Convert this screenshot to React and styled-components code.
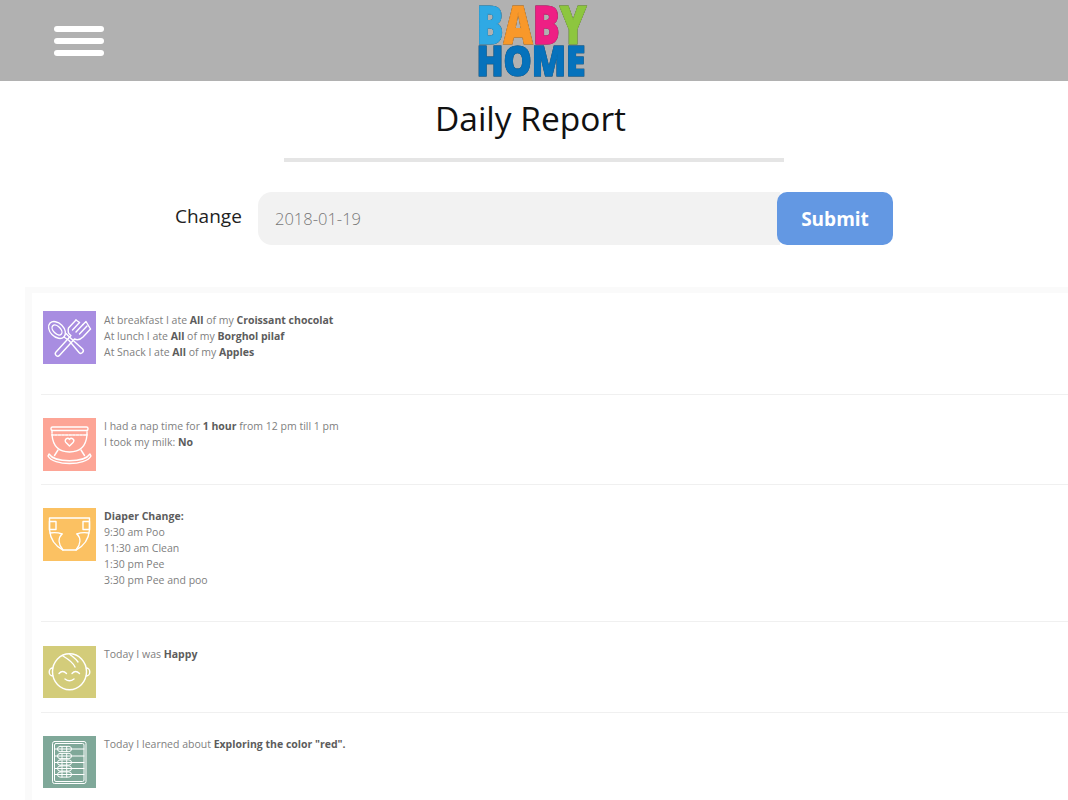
import React from 'react';
import styled, { createGlobalStyle } from 'styled-components';

const GlobalStyle = createGlobalStyle`
  html, body {
    margin: 0;
    padding: 0;
    background: #fff;
    overflow-x: hidden;
    font-family: "Open Sans", "Liberation Sans", sans-serif;
  }
  * { box-sizing: border-box; }
`;

const Page = styled.div`
  width: 1068px;
  height: 800px;
  overflow: hidden;
`;

const Header = styled.header`
  height: 81px;
  background: #b1b1b1;
  display: grid;
  grid-template-columns: 1fr auto 1fr;
  align-items: center;
  padding-left: 54px;
  padding-right: 54px;
`;

const Burger = styled.div`
  width: 50px;
  display: flex;
  flex-direction: column;
  gap: 6px;
`;

const BurgerBar = styled.span`
  display: block;
  height: 6px;
  border-radius: 3px;
  background: #fff;
`;

const Logo = styled.svg`
  display: block;
  width: 116px;
  height: 81px;
  filter: drop-shadow(0.7px 0.7px 0 #333);
  font-family: "Open Sans", sans-serif;
  font-weight: 800;
`;

const Title = styled.h1`
  margin: 13px 0 0;
  padding-right: 7px;
  text-align: center;
  font-size: 33.5px;
  line-height: 49px;
  font-weight: 400;
  color: #111;
`;

const Divider = styled.div`
  width: 500px;
  height: 4px;
  margin: 15px auto 0;
  background: #e5e5e5;
`;

const DateForm = styled.form`
  width: 718px;
  margin: 30px auto 0;
  display: flex;
  align-items: stretch;
`;

const Label = styled.label`
  width: 83px;
  font-size: 19px;
  line-height: 49px;
  color: #222;
`;

const DateInput = styled.input`
  width: 522px;
  height: 53px;
  border: none;
  outline: none;
  padding: 0 17px;
  border-radius: 14px 0 0 14px;
  background: #f2f2f2;
  font-family: inherit;
  font-size: 16.5px;
  font-weight: 300;
  color: #777;
`;

const Submit = styled.button`
  position: relative;
  width: 116px;
  height: 53px;
  margin-left: -3px;
  border: none;
  border-radius: 10px;
  background: #6398e3;
  color: #fff;
  font-family: inherit;
  font-size: 19px;
  font-weight: 700;
`;

const Panel = styled.section`
  margin: 42px -20px 0 25px;
  border-top: 6px solid #fafafa;
  border-left: 7px solid #fafafa;
  padding-top: 18px;
`;

const Copy = styled.div`
  padding: 0 0 33px;
  font-size: 10.5px;
  line-height: 16px;
  color: #808080;
  b { color: #5c5c5c; font-weight: 700; }
`;

const Row = styled.div`
  display: flex;
  align-items: flex-start;
  margin-left: 9px;
  padding: 23.2px 0 0 2px;
  border-bottom: 1px solid ${props => (props.$last ? 'transparent' : '#f0f0f0')};
  &:first-child { padding-top: 0; }
  &:first-child ${Copy} { padding: 1px 0 34px; }
`;

const IconBox = styled.div`
  flex: none;
  width: 53px;
  height: 52.5px;
  margin: 0 8px 13.5px 0;
  background: ${props => props.$color};
  svg {
    display: block;
    width: 53px;
    height: 53px;
    fill: none;
    stroke: #fff;
    stroke-width: ${props => props.$stroke || 1.4};
    stroke-linecap: round;
    stroke-linejoin: round;
  }
`;

const Line = styled.div``;

const CutleryIcon = () => (
  <svg viewBox="0 0 53 53">
    <ellipse cx="14" cy="19" rx="6.8" ry="9.8" transform="rotate(-45 14 19)" />
    <ellipse cx="14" cy="19" rx="3.6" ry="6" transform="rotate(-45 14 19)" />
    <path d="M21 26 L26 29.5 L36 41.5 a2.4 2.4 0 0 0 3.6 -3.4 L27 26.5 L23 22.5" />
    <path d="M33 9 L25.5 17 Q24 22 28 24.5 L13 41 a2.4 2.4 0 0 0 3.6 3.3 L31.5 28 Q36 30 40 26 L47.5 18" />
    <path d="M36.5 11.5 L29.5 19 M40 13.5 L33 21 M44 15 L36.5 23" />
    <path d="M33 9 L36.5 11.5 M40 13.5 L43 10.5 L47.5 18" />
  </svg>
);

const CradleIcon = () => (
  <svg viewBox="0 0 53 53">
    <rect x="8" y="9" width="37" height="3.5" rx="1.5" />
    <path d="M9 12.5 V17 H44 V12.5" strokeDasharray="2.4 1.2" />
    <path d="M9 17 C10 28 16 34 26.5 34 C37 34 43 28 44 17" />
    <path d="M26.5 28 l-3.8 -3.8 a2.3 2.3 0 0 1 3.8 -2.8 a2.3 2.3 0 0 1 3.8 2.8 z" />
    <path d="M15 32 L11.5 37.5 M38 32 L41.5 37.5" />
    <path d="M6 36 C12 45 41 45 47 36 L48 38 C43 48 10 48 5 38 Z" />
  </svg>
);

const DiaperIcon = () => (
  <svg viewBox="0 0 53 53">
    <path d="M6.5 10 H46.5 V22 C45.5 32 41 38 33 42 H20 C12 38 7.5 32 6.5 22 Z" />
    <rect x="6.5" y="13.5" width="6.5" height="8" />
    <rect x="40" y="13.5" width="6.5" height="8" />
    <path d="M20 42 C15 36 15 30 19 26" />
    <path d="M33 42 C38 36 38 30 34 26" />
    <path d="M7 25 Q14 24 19 26 M46 25 Q39 24 34 26" />
  </svg>
);

const BabyIcon = () => (
  <svg viewBox="0 0 53 53">
    <ellipse cx="26.5" cy="25.7" rx="17" ry="18" />
    <path d="M9.8 22 a3.6 4 0 0 0 0 8 M43.2 22 a3.6 4 0 0 1 0 8" />
    <path d="M20 10 C25 13 30 16 32 21 M27 8.5 C30 11 33 13 35 16" />
    <path d="M16 27.5 q3.5 -4 7.5 0 M29 27.5 q3.5 -4 7.5 0" />
    <path d="M22 33 q4.5 3.5 9 0" />
  </svg>
);

const AbacusIcon = () => (
  <svg viewBox="0 0 53 53">
    <rect x="9.5" y="5.5" width="33.5" height="42" rx="2" />
    <rect x="11.5" y="7.5" width="29.5" height="38" rx="1.5" />
    {[13, 20, 26.5, 32.5, 38.5].map(y => (
      <g key={y}>
        <path d={`M11.5 ${y} H41`} />
        <rect x="14.5" y={y - 2.6} width="14" height="5.2" rx="2.6" />
        <path d={`M19 ${y - 2.6} V${y + 2.6} M23.7 ${y - 2.6} V${y + 2.6}`} />
      </g>
    ))}
  </svg>
);

const App = () => (
  <Page>
    <GlobalStyle />
    <Header>
      <Burger>
        <BurgerBar />
        <BurgerBar />
        <BurgerBar />
      </Burger>
      <Logo viewBox="0 0 116 81">
        <text x="0.5" y="43.5" fontSize="53" strokeWidth="1.2" textLength="110" lengthAdjust="spacingAndGlyphs">
          <tspan fill="#2fa9e4" stroke="#2fa9e4">B</tspan>
          <tspan fill="#f8982a" stroke="#f8982a">A</tspan>
          <tspan fill="#ee1f84" stroke="#ee1f84">B</tspan>
          <tspan fill="#8dc63f" stroke="#8dc63f">Y</tspan>
        </text>
        <text x="0.5" y="76" fontSize="43" fill="#0672bc" stroke="#0672bc" strokeWidth="1.2" textLength="109" lengthAdjust="spacingAndGlyphs">
          HOME
        </text>
      </Logo>
      <span />
    </Header>

    <Title>Daily Report</Title>
    <Divider />

    <DateForm onSubmit={e => e.preventDefault()}>
      <Label>Change</Label>
      <DateInput defaultValue="2018-01-19" />
      <Submit type="submit">Submit</Submit>
    </DateForm>

    <Panel>
      <Row>
        <IconBox $color="#a88de1"><CutleryIcon /></IconBox>
        <Copy>
          <Line>At breakfast I ate <b>All</b> of my <b>Croissant chocolat</b></Line>
          <Line>At lunch I ate <b>All</b> of my <b>Borghol pilaf</b></Line>
          <Line>At Snack I ate <b>All</b> of my <b>Apples</b></Line>
        </Copy>
      </Row>
      <Row>
        <IconBox $color="#fda596"><CradleIcon /></IconBox>
        <Copy>
          <Line>I had a nap time for <b>1 hour</b> from 12 pm till 1 pm</Line>
          <Line>I took my milk: <b>No</b></Line>
        </Copy>
      </Row>
      <Row>
        <IconBox $color="#fbc162"><DiaperIcon /></IconBox>
        <Copy>
          <Line><b>Diaper Change:</b></Line>
          <Line>9:30 am Poo</Line>
          <Line>11:30 am Clean</Line>
          <Line>1:30 pm Pee</Line>
          <Line>3:30 pm Pee and poo</Line>
        </Copy>
      </Row>
      <Row>
        <IconBox $color="#d3cc7a"><BabyIcon /></IconBox>
        <Copy>
          <Line>Today I was <b>Happy</b></Line>
        </Copy>
      </Row>
      <Row $last>
        <IconBox $color="#7fa899" $stroke={1}><AbacusIcon /></IconBox>
        <Copy>
          <Line>Today I learned about <b>Exploring the color "red".</b></Line>
        </Copy>
      </Row>
    </Panel>
  </Page>
);

export default App;
